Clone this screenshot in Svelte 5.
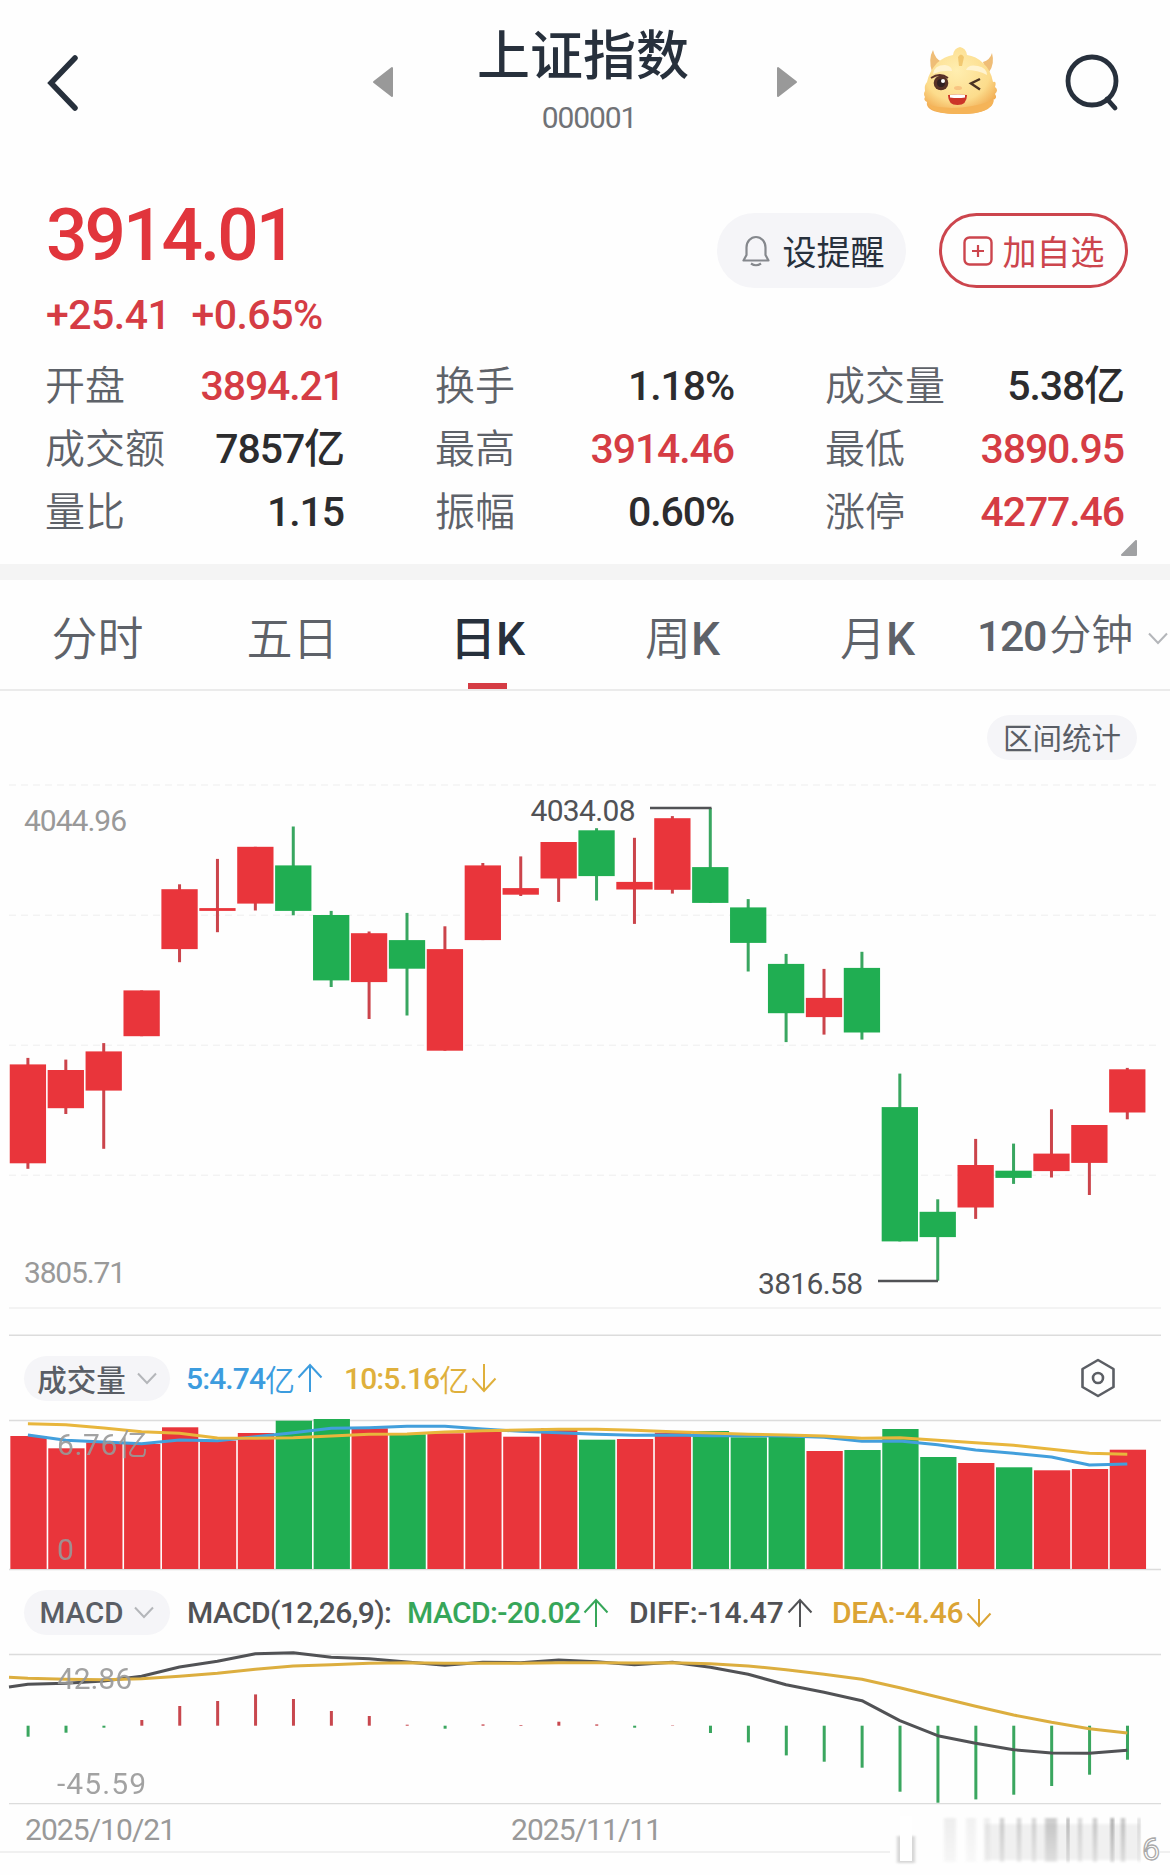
<script lang="ts">
  type Candle = { up: boolean; body: [number, number]; wick: [number, number] };

  const STEP = 37.91;
  const FIRST = 27.9;
  const BAR = 36.3;
  const VOLUME_BASE = 1569;
  const MACD_BASE = 1725.7;

  const stats = [
    { label: "开盘", value: "3894.21", up: true },
    { label: "换手", value: "1.18%" },
    { label: "成交量", value: "5.38亿" },
    { label: "成交额", value: "7857亿" },
    { label: "最高", value: "3914.46", up: true },
    { label: "最低", value: "3890.95", up: true },
    { label: "量比", value: "1.15" },
    { label: "振幅", value: "0.60%" },
    { label: "涨停", value: "4277.46", up: true },
  ];

  const tabs = [
    { id: "minute", text: "分时" },
    { id: "five", text: "五日" },
    { id: "day", text: "日", suffix: "K" },
    { id: "week", text: "周", suffix: "K" },
    { id: "month", text: "月", suffix: "K" },
  ];
  let activeTab = "day";

  const trend = "RRRRRRRGGRGRRRRGRRGGGRGGGRGRRR";

  // body top, body bottom, high, low
  const rows = [
    [1064.4, 1163.3, 1057.9, 1168.8],
    [1070, 1108.2, 1059.6, 1114],
    [1051.4, 1090.6, 1043.1, 1148.8],
    [990.4, 1036.2, 990.4, 1036.2],
    [889.2, 949.1, 884.3, 962.2],
    [908.1, 910.9, 858.9, 932.2],
    [846.8, 903.6, 846.8, 910.5],
    [865.4, 910.9, 826.5, 915.3],
    [915, 980.4, 910.9, 987],
    [933.2, 982.1, 931.5, 1019],
    [940.1, 968.7, 912.9, 1015.5],
    [949.1, 1050.7, 926.3, 1050.7],
    [865.4, 940.1, 863, 940.1],
    [888.1, 894.7, 856.4, 896],
    [842, 878.5, 842, 901.9],
    [830.3, 876.1, 828.2, 900.5],
    [881.9, 889.5, 837.8, 923.9],
    [818.2, 889.8, 816.1, 893.6],
    [867.1, 902.9, 808, 902.9],
    [907.4, 942.9, 899.1, 971.5],
    [963.9, 1013.2, 953.9, 1042.1],
    [997.9, 1017.1, 968.9, 1034.6],
    [967.9, 1032.5, 951.8, 1039.6],
    [1107.1, 1241.4, 1073.6, 1241.4],
    [1211.8, 1237.1, 1199.3, 1280.7],
    [1165, 1207.5, 1138.9, 1218.9],
    [1170.7, 1177.9, 1143.6, 1183.9],
    [1153.6, 1171.1, 1109.3, 1177.5],
    [1125, 1162.9, 1125, 1195],
    [1069.3, 1112.5, 1067.9, 1119.3],
  ];

  const candles: Candle[] = rows.map(([top, bottom, high, low], i) => ({
    up: trend[i] === "R",
    body: [top, bottom],
    wick: [high, low],
  }));

  const volumes = [
    1436, 1448.3, 1442.5, 1444, 1427.3, 1440.6, 1433, 1420.7, 1419, 1428.3,
    1434.3, 1433.3, 1432, 1436.7, 1428, 1439.7, 1439, 1432.7, 1431, 1437.3,
    1436, 1451, 1450, 1429, 1457, 1463, 1467.3, 1470.3, 1469, 1449.7,
  ];

  const ma5 = [
    115, 120.3, 122, 123.7, 120, 120.7, 116.7, 112.7, 108.3, 107.7,
    106.3, 106.3, 109, 111.3, 112.7, 114.3, 115.3, 115, 115.7, 115.7,
    116, 117.3, 121.3, 121, 124.7, 130, 133.3, 137, 145, 144,
  ];

  const ma10 = [
    103.7, 104.7, 108, 111.7, 113.3, 118, 118.3, 117.7, 116, 114.3,
    114, 112, 110.7, 110, 109.3, 109.3, 110.3, 111.7, 113, 114.3,
    115, 116, 118.3, 117.7, 120.3, 122.7, 125.3, 129.3, 133.3, 134.3,
  ];

  // positive values rise above the zero line
  const histogram = [
    -11, -7, -2, 5.7, 19.7, 24.7, 31.3, 26.7, 14.7, 9.7,
    1, -3, 1.3, 0.7, 4, 1.3, -2, 0.4, -7.3, -16.7,
    -29.7, -36, -42, -66, -77, -73.7, -69, -60.3, -49, -34,
  ];

  const diff = [
    104.3, 103.3, 101, 96.3, 87, 81.3, 73.7, 72.7, 77.3, 78.7,
    82, 85.3, 82.3, 82.7, 80, 81.7, 84.7, 82.3, 87.3, 94.3,
    104.7, 112.3, 120.7, 140.7, 155.7, 163.3, 169.7, 173, 173.3, 170.3,
  ];

  const dea = [
    98.3, 99.3, 99.7, 98.7, 96.3, 93.3, 89.3, 86, 84.7, 83.3,
    82.7, 83.3, 83.3, 83.3, 82.7, 82.7, 83, 82.7, 83.7, 86,
    89.7, 94.3, 99.3, 107.7, 117, 126.3, 135, 142.3, 148.7, 153,
  ];

  const x = (i: number) => FIRST + i * STEP;

  const line = (values: number[], base: number) =>
    values.map((v, i) => `${x(i).toFixed(1)},${(base + v).toFixed(1)}`).join(" ");

  // x, width, opacity of each smear in the corner mark
  const smears = [
    [944, 12, 0.1], [966, 10, 0.08], [984, 6, 0.1], [1000, 4, 0.32], [1017, 4, 0.28],
    [1032, 4, 0.28], [1045, 12, 0.32], [1067, 2, 0.8], [1078, 4, 0.25], [1093, 4, 0.35],
    [1111, 2.5, 0.8], [1121, 4, 0.4], [1138, 2, 0.35],
  ];
</script>

{#snippet arrow(down: boolean)}
  <svg class="arrow" class:down width="26" height="30" viewBox="0 0 26 30">
    <path d="M13 29V2M1.5 14.5L13 2l11.500 12.500" fill="none" stroke="currentColor" stroke-width="2" />
  </svg>
{/snippet}

{#snippet chevron()}
  <svg class="chevron" width="20" height="13" viewBox="0 0 20 13">
    <path d="M1 1.500l9 9.500 9-9.500" fill="none" stroke="#b4b6ba" stroke-width="2" />
  </svg>
{/snippet}

<div class="page">
  <header>
    <svg class="back" width="34" height="60" viewBox="0 0 34 60">
      <path d="M29 5L5 30l24 25" fill="none" stroke="#27303c" stroke-width="5.500" stroke-linecap="round" />
    </svg>
    <svg class="prev" width="22" height="32" viewBox="0 0 22 32">
      <path d="M20 2v28L2 16z" fill="#999" stroke="#999" stroke-width="2" stroke-linejoin="round" />
    </svg>
    <div class="title">
      <h1>上证指数</h1>
      <span>000001</span>
    </div>
    <svg class="next" width="22" height="32" viewBox="0 0 22 32">
      <path d="M2 2v28l18-14z" fill="#999" stroke="#999" stroke-width="2" stroke-linejoin="round" />
    </svg>
    <svg class="mascot" width="76" height="68" viewBox="0 0 76 68">
      <defs>
        <radialGradient id="face" cx="45%" cy="35%" r="70%">
          <stop offset="0" stop-color="#ffeeb0" />
          <stop offset=".65" stop-color="#fcdc8c" />
          <stop offset="1" stop-color="#f0a54a" />
        </radialGradient>
      </defs>
      <path d="M9 25Q5 12 10 3q2 9 9 12l-6 10zM66 25q6-8 3-19-2 7-9 9l3 9z" fill="#efbd77" />
      <path d="M2 44q-1-6 2-9 2-10 10-19 8-7 16-8 1-7 7-8 6 1 7 8 9 1 16 8 8 7 10 19 4-1 2 5 4 3 0 7 3 4-2 6 1 5-5 8-7 6-29 6-22 0-29-5-4-3-3-7-4-2-2-5-2-3 0-6z" fill="url(#face)" />
      <path d="M5 58q30 8 66-5-2 14-33 14-29 0-33-9z" fill="#f5b458" />
      <path d="M35 10q3-5 6 0l-2 9h-3z" fill="#e9b34c" opacity=".6" />
      <path d="M10 27q1-9 12-9 7 1 7 6-10-1-19 3zM43 23q2-6 12-4 9 2 9 9-9-5-21-5z" fill="#fff3d0" />
      <path d="M8 31q9-6 17 0" fill="none" stroke="#5b3028" stroke-width="1.800" />
      <circle cx="18" cy="36" r="7.300" fill="#573126" />
      <circle cx="18" cy="36" r="4" fill="#302022" />
      <circle cx="20" cy="34" r="2" fill="#fff" />
      <path d="M57 32l-9 4.500 9 6" fill="none" stroke="#4a3324" stroke-width="2.500" />
      <ellipse cx="35" cy="41" rx="4" ry="2" fill="#f8c482" />
      <path d="M25 48q9-1 19 0 0 10-9.500 10Q25 58 25 48z" fill="#cc3529" />
      <path d="M27 48q8-.8 15 0v2.500q-7 1-15 0z" fill="#fff" />
    </svg>
    <svg class="search" width="58" height="60" viewBox="0 0 58 60">
      <circle cx="28" cy="28" r="24" fill="none" stroke="#27303c" stroke-width="4.800" />
      <path d="M43 46l8 9" stroke="#27303c" stroke-width="4.800" stroke-linecap="round" />
    </svg>
  </header>

  <section class="quote">
    <div class="price">
      <strong>3914.01</strong>
      <div class="change"><span>+25.41</span><span>+0.65%</span></div>
    </div>
    <div class="actions">
      <button class="remind">
        <svg width="28" height="32" viewBox="0 0 28 32">
          <path d="M1.500 25.500H26.500L23.500 20V12.500a9.500 10.500 0 0 0-19 0V20zM9 28.500q5 3.500 10 0" fill="none" stroke="#85888d" stroke-width="2.200" stroke-linejoin="round" />
        </svg>
        设提醒
      </button>
      <button class="add">
        <svg width="30" height="30" viewBox="0 0 30 30">
          <rect x="1.500" y="1.500" width="27" height="27" rx="5" fill="none" stroke="currentColor" stroke-width="2.400" />
          <path d="M15 9v12M9 15h12" stroke="currentColor" stroke-width="2.200" />
        </svg>
        加自选
      </button>
    </div>
  </section>

  <section class="stats">
    {#each stats as item}
      <div class="stat">
        <span class="label">{item.label}</span>
        <span class="value" class:up={item.up}>{item.value}</span>
      </div>
    {/each}
    <svg class="corner" width="18" height="18" viewBox="0 0 18 18">
      <path d="M16 2v14H2z" fill="#a0a1a3" stroke="#a0a1a3" stroke-width="2" stroke-linejoin="round" />
    </svg>
  </section>

  <nav>
    {#each tabs as tab}
      <button class="tab" class:active={tab.id === activeTab} on:click={() => (activeTab = tab.id)}>
        {tab.text}{#if tab.suffix}<b>{tab.suffix}</b>{/if}
      </button>
    {/each}
    <button class="tab period"><b>120</b>分钟 {@render chevron()}</button>
  </nav>

  <div class="toolbar"><button class="pill">区间统计</button></div>

  <svg class="chart" width="1170" height="553" viewBox="0 783 1170 553">
    {#each [785, 915.2, 1045.3, 1175.3] as y}
      <line x1="9" x2="1161" y1={y} y2={y} stroke="#f3f3f3" stroke-width="1.500" stroke-dasharray="7 5" />
    {/each}
    <line x1="9" x2="1161" y1="1308" y2="1308" stroke="#f3f3f3" stroke-width="2" />
    <line x1="9" x2="1161" y1="1335.300" y2="1335.300" stroke="#dcdcdc" stroke-width="1.400" />
    {#each candles as candle, i}
      <g fill={candle.up ? "#e9353b" : "#20ae52"}>
        <rect class:wick-up={candle.up} class:wick-down={!candle.up} x={x(i) - 1.5} y={candle.wick[0]} width="3" height={candle.wick[1] - candle.wick[0]} />
        <rect x={x(i) - BAR / 2} y={candle.body[0]} width={BAR} height={candle.body[1] - candle.body[0]} />
      </g>
    {/each}
    <path d="M650 808h61.500M878 1281h60" stroke="#515255" stroke-width="2.600" />
    <g class="axis">
      <text x="24" y="831" textLength="103">4044.96</text>
      <text x="24" y="1283" textLength="102">3805.71</text>
    </g>
    <g class="mark">
      <text x="530.500" y="821" textLength="105">4034.08</text>
      <text x="758" y="1294" textLength="105">3816.58</text>
    </g>
  </svg>

  <div class="indicator volume">
    <button class="pill">成交量 {@render chevron()}</button>
    <span class="blue"><b>5:4.74</b>亿{@render arrow(false)}</span>
    <span class="yellow"><b>10:5.16</b>亿{@render arrow(true)}</span>
    <svg class="settings" width="36" height="40" viewBox="0 0 36 40">
      <path d="M18 2l15.500 9v18L18 38 2.500 29V11z" fill="none" stroke="#5b5e64" stroke-width="2.600" stroke-linejoin="round" />
      <circle cx="18" cy="20" r="5" fill="none" stroke="#5b5e64" stroke-width="2.600" />
    </svg>
  </div>

  <svg class="chart" width="1170" height="156" viewBox="0 1416 1170 156">
    <line x1="9" x2="1161" y1="1420.500" y2="1420.500" stroke="#dcdcdc" stroke-width="1.400" />
    <line x1="9" x2="1161" y1="1569.500" y2="1569.500" stroke="#dcdcdc" stroke-width="1.400" />
    {#each volumes as top, i}
      <rect x={x(i) + 0.6 - BAR / 2} y={top} width={BAR} height={VOLUME_BASE - top} fill={candles[i].up ? "#e9353b" : "#20ae52"} />
    {/each}
    <polyline points={line(ma5, 1320)} fill="none" stroke="#429fdc" stroke-width="3" stroke-linejoin="round" />
    <polyline points={line(ma10, 1320)} fill="none" stroke="#e8b63c" stroke-width="3" stroke-linejoin="round" />
    <g class="axis faded">
      <text x="57" y="1455" textLength="91">6.76<tspan class="cjk">亿</tspan></text>
      <text x="57" y="1560" textLength="16">0</text>
    </g>
  </svg>

  <div class="indicator macd">
    <button class="pill">MACD {@render chevron()}</button>
    <span class="params">MACD(12,26,9):</span>
    <span class="green">MACD:-20.02{@render arrow(false)}</span>
    <span class="dark">DIFF:-14.47{@render arrow(false)}</span>
    <span class="gold">DEA:-4.46{@render arrow(true)}</span>
  </div>

  <svg class="chart" width="1170" height="155" viewBox="0 1651 1170 155">
    <line x1="9" x2="1161" y1="1654.500" y2="1654.500" stroke="#dcdcdc" stroke-width="1.400" />
    <line x1="9" x2="1161" y1="1803.600" y2="1803.600" stroke="#dcdcdc" stroke-width="1.400" />
    {#each histogram as value, i}
      <rect x={x(i) - 1.3} y={MACD_BASE - Math.max(value, 0)} width="3" height={Math.abs(value)} fill={value > 0 ? "#c8474e" : "#3aa65f"} />
    {/each}
    <polyline points={`9,1687 ${line(diff, 1580)}`} fill="none" stroke="#515255" stroke-width="3" stroke-linejoin="round" />
    <polyline points={`9,1677.300 ${line(dea, 1580)}`} fill="none" stroke="#dcae3f" stroke-width="3" stroke-linejoin="round" />
    <g class="axis faded">
      <text x="57" y="1688.500" textLength="75">42.86</text>
      <text x="57" y="1794" textLength="89">-45.59</text>
    </g>
  </svg>

  <footer>
    <span>2025/10/21</span>
    <span>2025/11/11</span>
    <svg class="smear" width="280" height="58" viewBox="890 1810 280 58">
      <defs>
        <filter id="soft" x="-50%" y="-10%" width="200%" height="120%"><feGaussianBlur stdDeviation="1.600 1" /></filter>
        <linearGradient id="fade" x1="0" x2="0" y1="0" y2="1">
          <stop offset="0" stop-color="#666" />
          <stop offset=".6" stop-color="#999" />
          <stop offset="1" stop-color="#bbb" />
        </linearGradient>
      </defs>
      <rect x="880" y="1848" width="280" height="8" fill="#fefefe" />
      <rect x="897" y="1836" width="18" height="27" fill="#bbb" opacity=".6" filter="url(#soft)" />
      <rect x="900" y="1816" width="12" height="45" fill="#fff" />
      <rect x="985" y="1824" width="155" height="36" fill="#ddd" opacity=".4" filter="url(#soft)" />
      {#each smears as [left, width, opacity]}
        <rect x={left} y="1818" {width} height="44" fill="url(#fade)" {opacity} filter="url(#soft)" />
      {/each}
      <text x="1142" y="1860">6</text>
    </svg>
  </footer>
</div>

<style>
  :global(body) {
    margin: 0;
    background: #fefefe;
  }

  .page {
    width: 1170px;
    height: 1875px;
    overflow: hidden;
    background: #fefefe;
    color: #27303c;
    font-family: Roboto, "Noto Sans CJK SC", sans-serif;
  }

  svg {
    display: block;
    flex: none;
  }

  button {
    border: 0;
    padding: 0;
    background: none;
    font: inherit;
    color: inherit;
    white-space: nowrap;
  }

  b {
    font-weight: 500;
  }

  header {
    display: flex;
    height: 160px;
    padding-left: 46px;
    box-sizing: border-box;
  }

  .back {
    margin-top: 53px;
  }

  .prev {
    margin: 66px 0 0 292px;
  }

  .title {
    display: flex;
    flex-direction: column;
    align-items: center;
    width: 220px;
    margin: 25px 0 0 79px;
  }

  h1 {
    margin: 0;
    font-size: 53px;
    line-height: 64px;
    font-weight: 500;
  }

  .title span {
    font-size: 30px;
    line-height: 36px;
    letter-spacing: -1.1px;
    margin: 11px 0 0 12px;
    color: #707276;
  }

  .next {
    margin: 66px 0 0 83px;
  }

  .mascot {
    margin: 47px 0 0 125px;
  }

  .search {
    margin: 53px 0 0 65px;
  }

  .quote {
    display: flex;
    justify-content: space-between;
    height: 195px;
    padding: 0 42px 0 46px;
    box-sizing: border-box;
  }

  .price {
    color: #e1353c;
    padding-top: 33px;
  }

  .price strong {
    display: block;
    font-size: 73px;
    line-height: 84px;
    font-weight: 500;
    letter-spacing: -3px;
  }

  .change {
    display: flex;
    gap: 21px;
    margin-top: 14px;
    font-size: 41px;
    line-height: 48px;
    font-weight: 500;
    letter-spacing: -0.5px;
    color: #d53c44;
  }

  .actions {
    display: flex;
    gap: 33px;
    padding-top: 53px;
  }

  .actions button {
    display: flex;
    align-items: center;
    justify-content: center;
    width: 189px;
    height: 75px;
    border-radius: 38px;
    box-sizing: border-box;
    font-size: 34px;
  }

  .actions .remind {
    padding-left: 3px;
    background: #f5f5f8;
    gap: 13px;
  }

  .actions .add {
    border: 3px solid #cc454d;
    color: #cc454d;
    gap: 10px;
  }

  .stats {
    position: relative;
    display: grid;
    grid-template-columns: repeat(3, 298px);
    column-gap: 92px;
    grid-auto-rows: 63px;
    height: 209px;
    padding-left: 45px;
    border-bottom: 16px solid #f4f4f4;
  }

  .stat {
    display: flex;
    justify-content: space-between;
    align-items: center;
    line-height: 63px;
  }

  .label {
    font-size: 40px;
    font-weight: 350;
    color: #5e6269;
  }

  .value {
    font-size: 41px;
    font-weight: 500;
    letter-spacing: -1.1px;
    margin-right: -1px;
    color: #2c2c2e;
  }

  .value.up {
    color: #d53c44;
  }

  .corner {
    position: absolute;
    left: 1120px;
    bottom: 7px;
  }

  nav {
    display: flex;
    height: 109px;
    border-bottom: 2px solid #ebebeb;
  }

  .tab {
    position: relative;
    width: 195px;
    flex: none;
    padding-top: 3px;
    font-size: 46px;
    font-weight: 350;
    line-height: 112px;
    color: #5e6269;
  }

  .tab.active {
    font-weight: 500;
    color: #27303c;
  }

  .tab.active::after {
    content: "";
    position: absolute;
    left: 78px;
    bottom: 0;
    width: 39px;
    height: 6px;
    background: #d53c44;
  }

  .period {
    display: flex;
    align-items: center;
    padding-left: 2px;
    font-size: 42px;
  }

  .period b {
    font-size: 43px;
    letter-spacing: -1.4px;
    margin-right: 3px;
  }

  .period .chevron {
    margin: 4px 0 0 15px;
  }

  .toolbar {
    display: flex;
    justify-content: flex-end;
    height: 92px;
    padding: 24px 33px 0 0;
    box-sizing: border-box;
  }

  .toolbar .pill {
    padding-bottom: 3px;
    box-sizing: border-box;
  }

  .pill {
    display: flex;
    align-items: center;
    justify-content: center;
    width: 150px;
    height: 45px;
    border-radius: 23px;
    background: #f5f5f8;
    font-size: 29.5px;
    color: #5a5e66;
  }

  .axis,
  .mark {
    font-size: 30px;
    fill: #999;
  }

  .mark {
    fill: #515255;
  }

  .cjk {
    font-weight: 350;
  }

  .faded {
    opacity: 0.9;
  }

  .wick-up {
    fill: #cb444b;
  }

  .wick-down {
    fill: #39a660;
  }

  .indicator {
    display: flex;
    align-items: center;
    box-sizing: border-box;
    padding-left: 24px;
    font-size: 30px;
    white-space: nowrap;
  }

  .indicator span {
    display: flex;
    align-items: center;
    font-weight: 500;
    letter-spacing: -0.6px;
  }

  .indicator .pill {
    width: 146px;
    gap: 11px;
    font-weight: 500;
  }

  .volume {
    height: 80px;
    padding-top: 4px;
  }

  .indicator.volume span {
    font-weight: 350;
    letter-spacing: -0.9px;
  }

  .macd {
    height: 79px;
    padding-top: 2px;
  }

  .arrow {
    margin-left: 3px;
  }

  .arrow.down {
    transform: rotate(180deg);
  }

  .blue {
    width: 158px;
    margin-left: 16px;
    color: #3c9cde;
  }

  .yellow {
    color: #dfb03c;
  }

  .settings {
    margin-left: auto;
    margin-right: 54px;
  }

  .params {
    width: 220px;
    margin-left: 17px;
    color: #515255;
  }

  .green {
    width: 222px;
    color: #36a659;
  }

  .indicator .dark {
    width: 203px;
    letter-spacing: -0.1px;
    color: #515255;
  }

  .indicator .gold {
    letter-spacing: -0.3px;
    color: #dba435;
  }

  footer {
    position: relative;
    display: flex;
    gap: 339px;
    height: 45px;
    padding-left: 25px;
    border-bottom: 2px solid #f0f0f0;
    font-size: 30px;
    line-height: 48px;
    letter-spacing: -0.95px;
    color: #999;
  }

  footer span {
    width: 147px;
  }

  .smear {
    position: absolute;
    left: 890px;
    top: 4px;
  }

  .smear text {
    font-size: 32px;
    fill: #fff;
    stroke: #aaa;
    stroke-width: 1.3px;
  }
</style>
